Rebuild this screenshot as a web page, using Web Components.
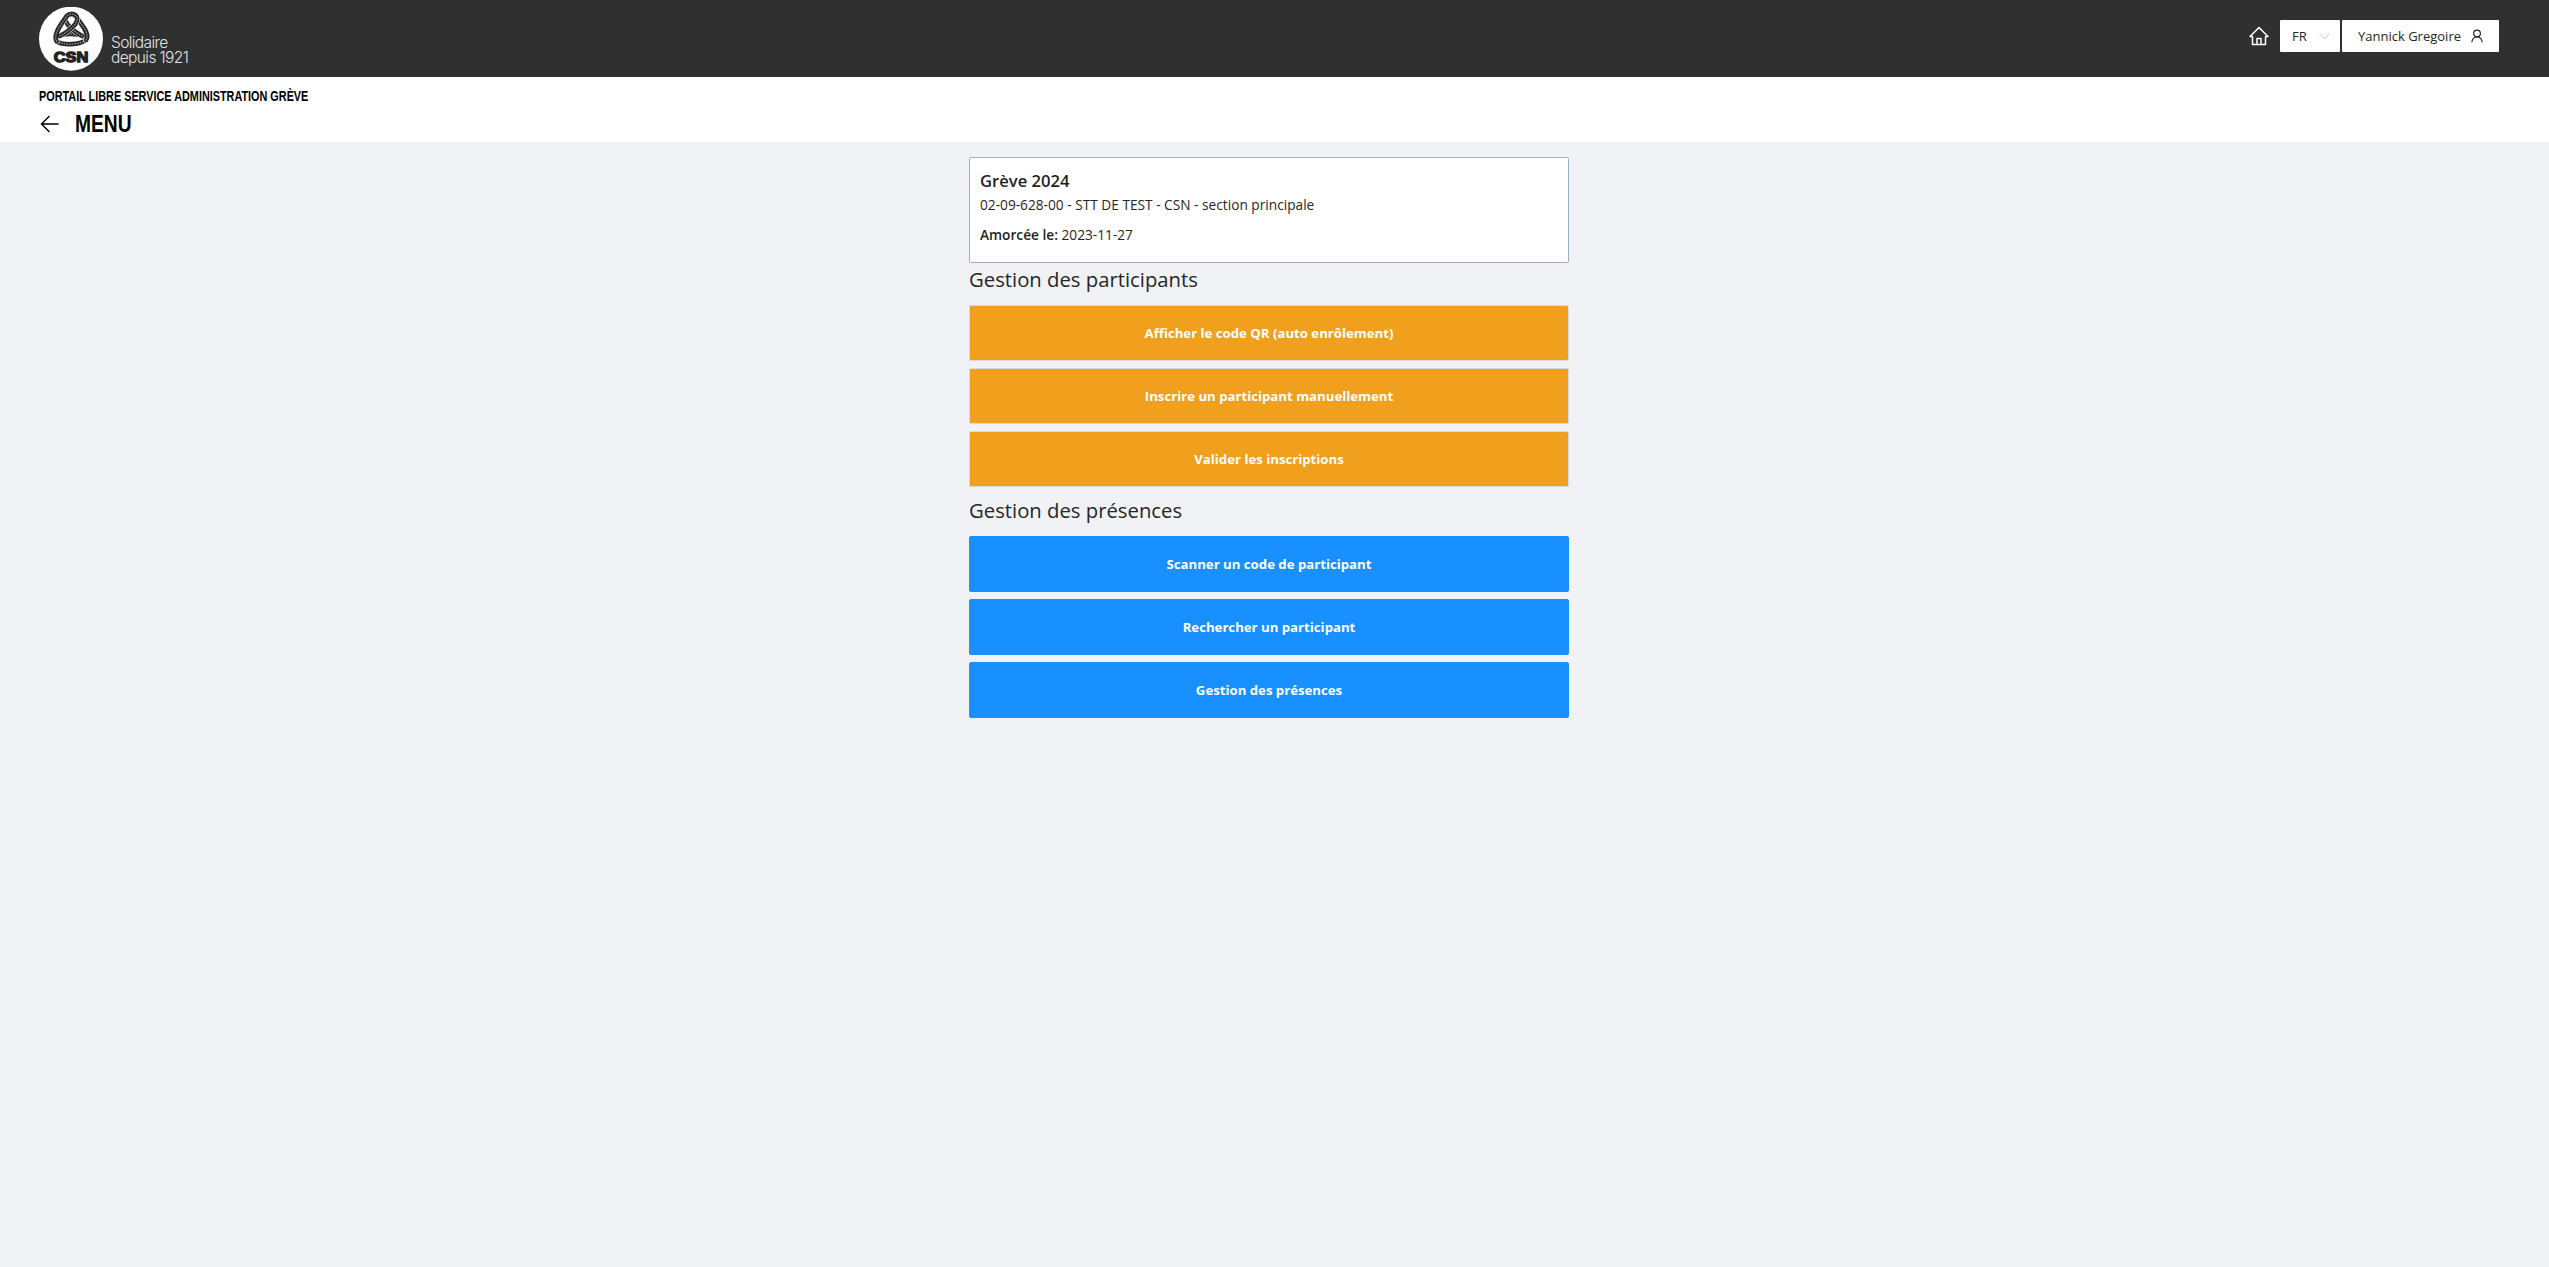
<!DOCTYPE html>
<html lang="fr">
<head>
<meta charset="utf-8">
<title>Portail libre service administration grève</title>
<style>
  html, body { margin: 0; height: 100%; }
  body { background: #f0f2f5; font-family: "Open Sans", "Noto Sans", sans-serif; color: #262626; }
</style>
</head>
<body>
<app-header name="Yannick Gregoire" lang-code="FR"></app-header>
<title-band kicker="PORTAIL LIBRE SERVICE ADMINISTRATION GRÈVE" heading="MENU"></title-band>
<menu-page>
  <strike-card heading="Grève 2024" detail="02-09-628-00 - STT DE TEST - CSN - section principale" label="Amorcée le:" date="2023-11-27"></strike-card>
  <section-title>Gestion des participants</section-title>
  <action-button kind="orange">Afficher le code QR (auto enrôlement)</action-button>
  <action-button kind="orange">Inscrire un participant manuellement</action-button>
  <action-button kind="orange">Valider les inscriptions</action-button>
  <section-title>Gestion des présences</section-title>
  <action-button kind="blue">Scanner un code de participant</action-button>
  <action-button kind="blue">Rechercher un participant</action-button>
  <action-button kind="blue">Gestion des présences</action-button>
</menu-page>

<script>
// rope strands of the knot, drawn back to front
const KNOT = [
  'M84 102C108 92 142 94 166 104',
  'M80 118C100 131 148 129 168 114',
  'M168 114C182 96 152 66 140 46C132 34 116 34 108 46C100 62 130 88 156 102',
  'M80 118C68 96 96 64 108 45C116 33 132 33 140 44C150 60 118 88 90 102'
];

class CsnLogo extends HTMLElement {
  constructor() {
    super();
    this.attachShadow({ mode: 'open' });
    const rope = KNOT.map(d => `
      <path d="${d}" stroke="#fff" stroke-width="17"/>
      <path d="${d}" stroke="#262626" stroke-width="14"/>
      <path d="${d}" stroke="#8c8c8c" stroke-width="4" stroke-dasharray="2 6"/>`).join('');
    this.shadowRoot.innerHTML = `
      <style>
        :host { display: flex; align-items: center; gap: 8px; }
        svg { display: block; width: 64px; height: 64px; }
        .tag { font: 300 15.5px/15px Inter, Roboto, sans-serif; color: #e4e4e4; letter-spacing: -0.6px; padding-top: 22px; }
      </style>
      <svg viewBox="27 15 192 192">
        <circle cx="123" cy="110" r="96" fill="#fff"/>
        <g fill="none" stroke-linecap="round" stroke-linejoin="round">${rope}</g>
        <text x="71" y="180" font-family="'Liberation Sans', sans-serif" font-weight="700" font-size="44" textLength="104" lengthAdjust="spacingAndGlyphs" fill="#222" stroke="#222" stroke-width="4">CSN</text>
      </svg>
      <div class="tag">Solidaire<br>depuis 1921</div>
    `;
  }
}

class AppHeader extends HTMLElement {
  constructor() {
    super();
    this.attachShadow({ mode: 'open' });
    this.shadowRoot.innerHTML = `
      <style>
        :host { display: flex; align-items: center; justify-content: space-between; height: 77px; padding: 0 50px 0 39px; background: #303030; box-sizing: border-box; }
        .tools { display: flex; align-items: center; font-size: 13px; color: #262626; padding-bottom: 5px; }
        .home { display: block; width: 20px; height: 20px; margin-right: 11px; }
        .box { display: flex; align-items: center; height: 32px; background: #fff; border-radius: 1px; box-sizing: border-box; }
        .lang { width: 60px; padding-left: 12px; margin-right: 2px; justify-content: flex-start; }
        .lang svg { margin-left: 12px; }
        .user { width: 157px; justify-content: center; gap: 10px; }
      </style>
      <csn-logo></csn-logo>
      <div class="tools">
        <svg class="home" viewBox="0 0 20 20" fill="none" stroke="#fff" stroke-width="1.5" stroke-linejoin="round">
          <path d="M1 10.5 10 1.5l9 9h-2.5V18.5H3.5V10.5Z"/>
          <path d="M8 18.5v-6h4v6"/>
        </svg>
        <div class="box lang"><span class="code"></span>
          <svg width="11" height="7" viewBox="0 0 11 7" fill="none" stroke="#c4c4c4" stroke-width="1"><path d="M.5 .5 5.5 6l5-5.5"/></svg>
        </div>
        <div class="box user"><span class="who"></span>
          <svg width="12" height="14" viewBox="0 0 12 14" fill="none" stroke="#262626" stroke-width="1.2"><circle cx="6" cy="4.5" r="3.4"/><path d="M.8 13.2C1.2 10 3.2 8 6 8s4.8 2 5.2 5.2"/></svg>
        </div>
      </div>
    `;
    this.shadowRoot.querySelector('.code').textContent = this.getAttribute('lang-code');
    this.shadowRoot.querySelector('.who').textContent = this.getAttribute('name');
  }
}

class TitleBand extends HTMLElement {
  constructor() {
    super();
    this.attachShadow({ mode: 'open' });
    this.shadowRoot.innerHTML = `
      <style>
        /* no condensed face installed, so the text is squeezed by hand */
        :host { display: block; height: 65px; padding: 10px 39px 0; background: #fff; box-sizing: border-box; color: #000; font-family: "Liberation Sans", sans-serif; font-weight: 700; }
        .kicker { font-size: 15px; line-height: 17px; white-space: nowrap; transform: scaleX(.723); transform-origin: left; }
        .row { display: flex; align-items: center; gap: 16px; margin-top: 6px; }
        svg { display: block; width: 20px; height: 20px; }
        h1 { margin: 0; font-size: 24px; line-height: 28px; font-weight: 700; transform: scaleX(.8); transform-origin: left; }
      </style>
      <div class="kicker"></div>
      <div class="row">
        <svg viewBox="0 0 20 20" fill="none" stroke="#000" stroke-width="1.4"><path d="M19.5 10H2.5M10.5 2 2.5 10l8 8"/></svg>
        <h1></h1>
      </div>
    `;
    this.shadowRoot.querySelector('.kicker').textContent = this.getAttribute('kicker');
    this.shadowRoot.querySelector('h1').textContent = this.getAttribute('heading');
  }
}

class MenuPage extends HTMLElement {
  constructor() {
    super();
    this.attachShadow({ mode: 'open' });
    this.shadowRoot.innerHTML = `
      <style>
        :host { display: flex; flex-direction: column; width: 611px; margin: 0 auto; padding: 15px 11px 0 0; box-sizing: border-box; }
      </style>
      <slot></slot>
    `;
  }
}

class StrikeCard extends HTMLElement {
  constructor() {
    super();
    this.attachShadow({ mode: 'open' });
    this.shadowRoot.innerHTML = `
      <style>
        :host { display: block; height: 106px; padding: 12px 10px; background: #fff; border: 1px solid #a4acc4; border-radius: 2px; box-sizing: border-box; font-size: 13.7px; line-height: 20px; color: #262626; }
        h2 { margin: 0 0 3px; font-size: 16.6px; line-height: 22px; font-weight: 600; color: #1f1f1f; }
        p { margin: 0 0 10px; }
        b { font-weight: 600; color: #1f1f1f; }
      </style>
      <h2></h2>
      <p class="detail"></p>
      <p><b></b> <span></span></p>
    `;
    const root = this.shadowRoot;
    root.querySelector('h2').textContent = this.getAttribute('heading');
    root.querySelector('.detail').textContent = this.getAttribute('detail');
    root.querySelector('b').textContent = this.getAttribute('label');
    root.querySelector('span').textContent = this.getAttribute('date');
  }
}

class SectionTitle extends HTMLElement {
  constructor() {
    super();
    this.attachShadow({ mode: 'open' });
    this.shadowRoot.innerHTML = `
      <style>
        :host { display: block; height: 42px; font-size: 20.3px; line-height: 32px; color: #262626; box-sizing: border-box; }
      </style>
      <slot></slot>
    `;
  }
}

class ActionButton extends HTMLElement {
  constructor() {
    super();
    this.attachShadow({ mode: 'open' });
    this.shadowRoot.innerHTML = `
      <style>
        :host { display: block; margin-bottom: 7px; }
        button { display: block; width: 100%; height: 56px; padding: 0; border: 1px solid #d9d9d9; border-radius: 2px; font: 700 13.2px "Open Sans", "Noto Sans", sans-serif; color: #fff; cursor: pointer; }
        :host([kind="orange"]) button { background: #f1a01e; }
        :host([kind="blue"]) button { background: #1890ff; border-color: #1890ff; }
      </style>
      <button type="button"><slot></slot></button>
    `;
  }
}

customElements.define('csn-logo', CsnLogo);
customElements.define('app-header', AppHeader);
customElements.define('title-band', TitleBand);
customElements.define('menu-page', MenuPage);
customElements.define('strike-card', StrikeCard);
customElements.define('section-title', SectionTitle);
customElements.define('action-button', ActionButton);
</script>
</body>
</html>
